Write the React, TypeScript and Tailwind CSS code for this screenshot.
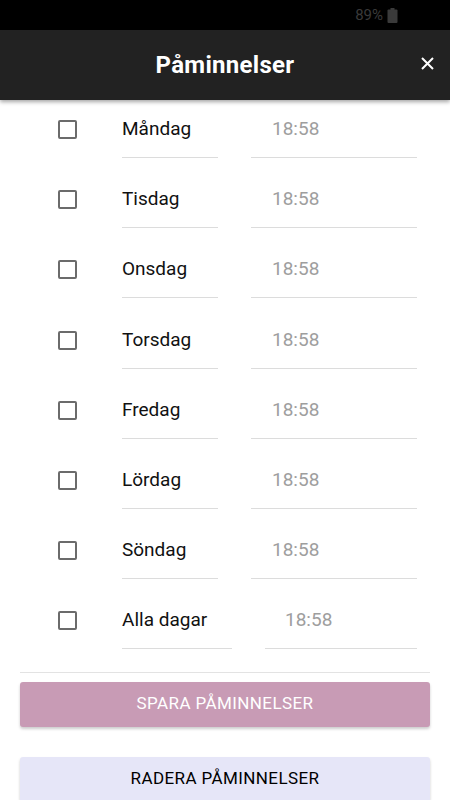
import React from "react";

const days = ["Måndag", "Tisdag", "Onsdag", "Torsdag", "Fredag", "Lördag", "Söndag"];

const Row = ({ label, wide }: { label: string; wide?: boolean }) => {
  return (
    <div className="flex h-[70.2px] items-start pl-[58px] pr-[33px]">
      {/* Checkbox */}
      <div className="mt-[20px] h-[19px] w-[19px] shrink-0 rounded-[2px] border-2 border-[#6b6b6b]" />
      <div
        className={`ml-[45px] mt-[13px] h-[45px] shrink-0 border-b border-[#dcdcdc] text-[19px] leading-[32px] text-[#111] ${
          wide ? "w-[110px]" : "w-[96px]"
        }`}
      >
        {label}
      </div>
      <div
        className={`mt-[13px] h-[45px] flex-1 border-b border-[#dcdcdc] text-[19px] leading-[32px] text-[#9e9e9e] ${
          wide ? "ml-[33px] pl-[20px]" : "ml-[33px] pl-[21px]"
        }`}
      >
        18:58
      </div>
    </div>
  );
};

export default function App() {
  return (
    <div
      className="h-[800px] w-[450px] overflow-hidden bg-white"
      style={{ fontFamily: "Roboto, 'Noto Sans', sans-serif" }}
    >
      {/* Status bar */}
      <div className="flex h-[30px] items-center justify-end bg-black pr-[52px]">
        <span className="text-[15px] text-[#3a3a3a]">89%</span>
        <svg width="11" height="15" viewBox="0 0 11 15" className="ml-[4px]">
          <rect x="3.5" y="0" width="4" height="2" fill="#3a3a3a" />
          <rect x="0.5" y="1.5" width="10" height="13.5" rx="1" fill="#3a3a3a" />
        </svg>
      </div>

      {/* Header */}
      <div className="relative z-10 flex h-[70px] items-center justify-center bg-[#222222] shadow-[0_2px_4px_rgba(0,0,0,0.35)]">
        <h1 className="text-[24px] font-bold tracking-[0.3px] text-white">Påminnelser</h1>
        <svg
          width="13"
          height="13"
          viewBox="0 0 13 13"
          className="absolute right-[16px] top-[27px]"
        >
          <path d="M1 1 L12 12 M12 1 L1 12" stroke="white" strokeWidth="2" />
        </svg>
      </div>

      {/* Rows */}
      <div>
        {days.map((d) => (
          <Row key={d} label={d} />
        ))}
        <Row label="Alla dagar" wide />
      </div>

      <div className="mx-[20px] mt-[10px] border-t border-[#e3e3e3]" />

      <div className="px-[20px]">
        <button className="mt-[9px] flex h-[45px] w-full items-center justify-center rounded-[3px] bg-[#c89bb5] text-[17px] tracking-[0.4px] text-white shadow-[0_2px_3px_rgba(0,0,0,0.2)]">
          SPARA PÅMINNELSER
        </button>
        <button className="mt-[30px] flex h-[45px] w-full items-center justify-center rounded-[3px] bg-[#e6e6f8] text-[17px] tracking-[0.4px] text-black shadow-[0_2px_3px_rgba(0,0,0,0.2)]">
          RADERA PÅMINNELSER
        </button>
      </div>
    </div>
  );
}
